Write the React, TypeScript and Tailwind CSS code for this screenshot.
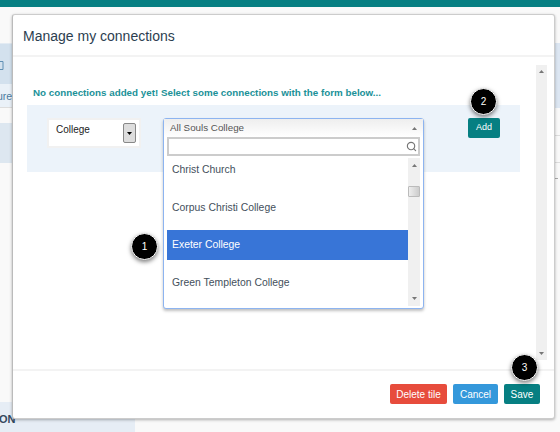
import { Search } from "lucide-react";

const font = "font-['Liberation_Sans',Arial,sans-serif]";

function Badge({ n, className }: { n: number; className: string }) {
  return (
    <div
      className={`absolute flex h-[27px] w-[27px] items-center justify-center rounded-full border border-white bg-black text-[10px] text-white shadow-[0_2px_4px_rgba(0,0,0,0.5)] ${className}`}
    >
      {n}
    </div>
  );
}

function Arrow({ down }: { down?: boolean }) {
  return (
    <svg width="5" height="3" viewBox="0 0 5 3" fill="#777">
      <path d={down ? "M0 0h5L2.5 3z" : "M0 3h5L2.5 0z"} />
    </svg>
  );
}

const colleges = ["Christ Church", "Corpus Christi College", "Exeter College", "Green Templeton College"];

export default function App() {
  return (
    <div className={`relative h-[432px] w-[560px] overflow-hidden bg-[#f9f9f9] ${font}`}>
      {/* page behind the dialog */}
      <div className="h-[7px] bg-[#067f82]" />
      <div className="mt-[36px] flex justify-between">
        <div className="w-[12px]">
          <div className="flex h-[41px] items-center border-t border-[#e3ebf3] bg-[#d3e1ee]">
            <svg width="4" height="12" viewBox="0 0 4 12" fill="none" stroke="#5f8fb4">
              <path d="M0 3.5h3v8H0" />
            </svg>
          </div>
          <div className="h-[24px] border-b border-[#ddd] bg-[#eaf1f8] text-[10.5px] leading-[24px] text-[#4a7ba0]">
            <span className="ml-[-3px] block">ure</span>
          </div>
          <div className="mt-[15px] h-[40px] bg-[#dde7f0]" />
        </div>
        <div className="w-[5px]">
          <div className="h-[65px] bg-[#dce6f2]" />
          <div className="mt-[27px] h-px bg-[#ddd]" />
          <div className="mt-[26px] h-px bg-[#ddd]" />
          <div className="mt-[15px] h-px w-[3px] bg-[#aaa]" />
        </div>
      </div>
      <div className="absolute bottom-0 left-0 h-[30px] w-[135px] bg-[#e6edf5] pl-0 text-[11px] font-bold leading-[34px] text-[#34495e]">
        <span className="ml-[-1px]">ON</span>
      </div>

      {/* dialog */}
      <div className="absolute left-[12px] top-[14px] flex h-[405px] w-[543px] flex-col rounded-[3px] border border-[#ccc] border-l-[#bbb] bg-white shadow-[0_1px_3px_rgba(0,0,0,0.3)]">
        <div className="flex h-[42px] shrink-0 items-center border-b-2 border-[#f3f3f3] pl-[10px] pt-[2px] text-[14px] text-[#2c3e50]">
          Manage my connections
        </div>

        <div className="relative flex min-h-0 flex-1">
          <div className="flex-1 pl-[14px] pr-[16px]">
            <p className="mt-[30px] pl-[6px] text-[9.8px] font-bold leading-[12px] text-[#1b9198]">
              No connections added yet! Select some connections with the form below...
            </p>
            <div className="mt-[6px] flex h-[67px] items-start bg-[#ecf3fa] pl-[20px] pt-[13px]">
              <div className="flex h-[30px] w-[94px] items-start justify-between border-2 border-[#f1f1f1] bg-white pl-[7px] pr-[3px] pt-[2px]">
                <span className="text-[10px] leading-[16px] text-[#222]">College</span>
                <span className="mt-[1px] flex h-[20px] w-[13px] items-center justify-center rounded-[2px] border border-[#888] bg-[#ddd]">
                  <svg width="5" height="3" viewBox="0 0 5 3">
                    <path d="M0 0h5L2.5 3z" fill="#000" />
                  </svg>
                </span>
              </div>

              <div className="relative ml-[22px] h-[18px] w-[261px]">
                {/* open select */}
                <div className="absolute left-0 top-0 z-10 h-[191px] w-[261px] rounded-[3px] border border-[#8db4f0] bg-white shadow-[0_2px_3px_rgba(0,0,0,0.25)]">
                  <div className="flex h-[18px] items-center justify-between bg-gradient-to-b from-[#eee] to-white px-[6px] text-[9.8px] text-[#555]">
                    All Souls College
                    <Arrow />
                  </div>
                  <div className="mx-[3px] flex h-[19px] items-center justify-end border-2 border-[#ccc] bg-white pr-[1px]">
                    <Search size={11} strokeWidth={2.5} className="text-[#777]" />
                  </div>
                  <div className="mt-[2px] flex">
                    <ul className="ml-[3px] mt-[-3px] w-[241px]">
                      {colleges.map((name) => (
                        <li
                          key={name}
                          className={`mb-[7.5px] flex h-[30px] items-center pl-[5px] text-[10.4px] ${
                            name === "Exeter College" ? "bg-[#3875d7] text-white" : "text-[#444f5c]"
                          }`}
                        >
                          {name}
                        </li>
                      ))}
                    </ul>
                    <div className="flex h-[148px] w-[12px] flex-col items-center justify-between bg-[#f0f0f0] py-[6px]">
                      <Arrow />
                      <span className="absolute right-[3px] top-[67px] h-[11px] w-[12px] rounded-[1px] border border-[#bbb] bg-gradient-to-r from-[#eee] to-[#ccc]" />
                      <Arrow down />
                    </div>
                  </div>
                </div>
              </div>

              <button className="ml-[44px] h-[20px] w-[32px] rounded-[2px] bg-[#067f82] text-[9px] text-white">
                Add
              </button>
            </div>
          </div>
          <div className="mr-[7px] mt-[8px] flex h-[295px] w-[11px] flex-col items-center justify-between bg-[#f0f0f0] py-[5px]">
            <Arrow />
            <Arrow down />
          </div>
          <Badge n={1} className="left-[118px] top-[176px]" />
          <Badge n={2} className="left-[457px] top-[31px]" />
        </div>

        <div className="relative flex h-[49px] shrink-0 items-center justify-end gap-[6px] border-t-2 border-[#f3f3f3] pb-[1px] pr-[14px] text-[10px] text-white">
          <button className="h-[20px] w-[57px] rounded-[2px] bg-[#e74c3c]">Delete tile</button>
          <button className="h-[20px] w-[45px] rounded-[2px] bg-[#3498db]">Cancel</button>
          <button className="h-[20px] w-[36px] rounded-[2px] bg-[#067f82]">Save</button>
          <Badge n={3} className="left-[498px] top-[-17px]" />
        </div>
      </div>
    </div>
  );
}
